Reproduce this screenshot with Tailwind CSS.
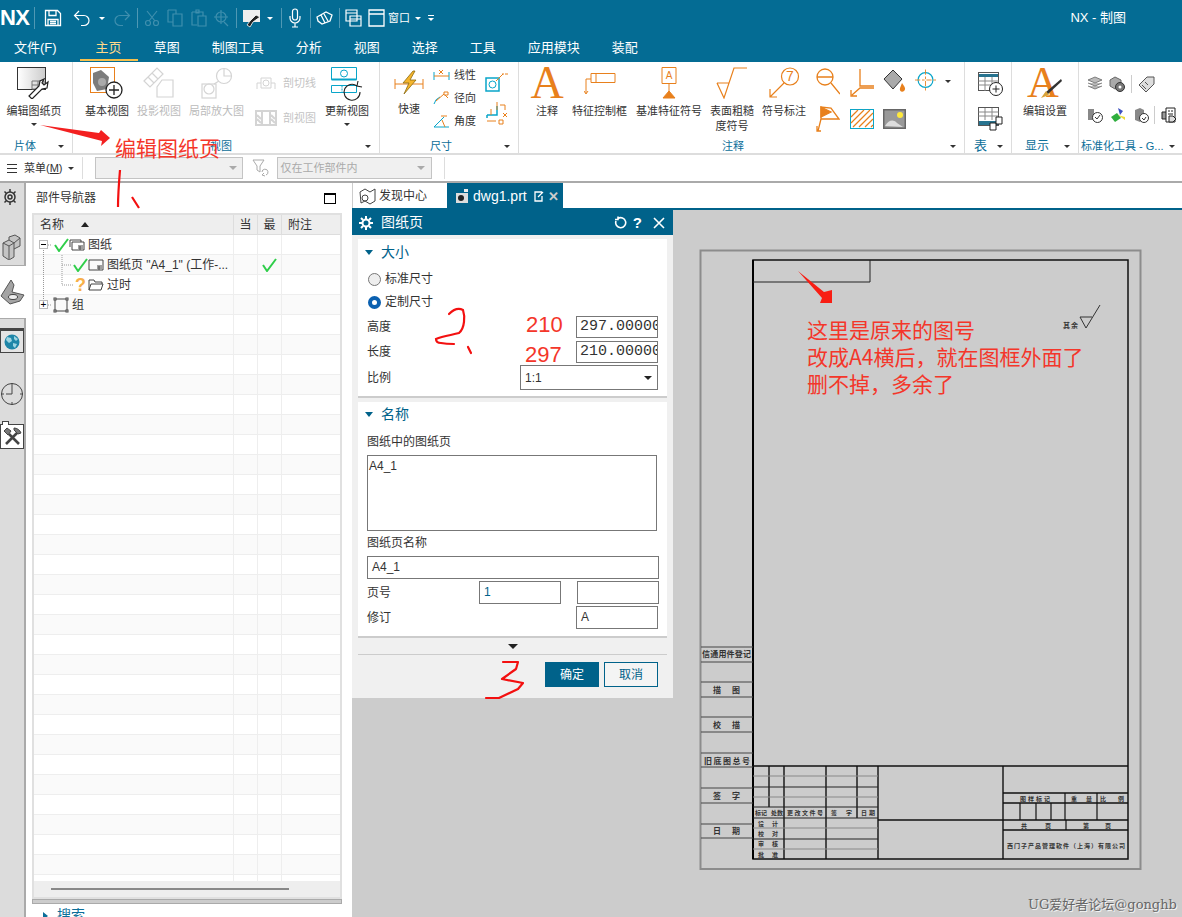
<!DOCTYPE html>
<html lang="zh">
<head>
<meta charset="utf-8">
<title>NX - 制图</title>
<script src="https://cdn.jsdelivr.net/npm/@tailwindcss/browser@4"></script>
</head>
<body class="bg-white">
<div class="relative w-[1182px] h-[917px] overflow-hidden text-[#333] text-[11px] font-['Liberation_Sans','Noto_Sans_CJK_SC',sans-serif]">

  <!-- title bar + menu -->
  <header class="h-[62px] bg-[#046c94] text-white">
    <div class="h-[36px] flex items-center relative">
      <span class="w-[35px] text-[22px] font-bold leading-none tracking-tight border-r border-white/30">NX</span>
      <svg class="ml-[9px] w-[18px] h-[18px]" viewBox="0 0 18 18" fill="none" stroke="#fff" stroke-width="1.3"><path d="M1.5 1.5h12l3 3v12h-15zM5 1.5v5h7v-5M4 16.5v-6h10v6M6 12.5h6M6 14.5h6"/></svg>
      <svg class="ml-[11px] w-[18px] h-[18px]" viewBox="0 0 18 18" fill="none" stroke="#fff" stroke-width="1.2"><path d="M6 2L1.5 6.500 6 11M1.500 6.500h9.500a5 5 0 0 1 0 10h-3"/></svg>
      <span class="ml-[8px] w-0 h-0 border-x-[3px] border-t-[3px] border-x-transparent border-t-white"></span>
      <svg class="ml-[8px] w-[18px] h-[18px]" viewBox="0 0 18 18" fill="none" stroke="#3f8fae" stroke-width="1.2"><path d="M12 2l4.500 4.500L12 11M16.500 6.500H7a5 5 0 0 0 0 10h3"/></svg>
      <span class="ml-[6px] h-[20px] border-l border-white/30"></span>
      <svg class="ml-[6px] w-[16px] h-[18px]" viewBox="0 0 16 18" fill="none" stroke="#3f8fae" stroke-width="1.200"><circle cx="4" cy="14" r="2.500"/><circle cx="12" cy="14" r="2.500"/><path d="M5 12L13 2M11 12L3 2"/></svg>
      <svg class="ml-[7px] w-[16px] h-[18px]" viewBox="0 0 16 18" fill="none" stroke="#3f8fae" stroke-width="1.200"><path d="M1 1h8v4M1 1v12h5M6 5h9v12H6z"/></svg>
      <svg class="ml-[8px] w-[16px] h-[18px]" viewBox="0 0 16 18" fill="none" stroke="#3f8fae" stroke-width="1.200"><path d="M1 3h11v4M1 3v13h5M5 1h3v3H5zM7 7h8v10H7z"/></svg>
      <svg class="ml-[6px] w-[16px] h-[18px]" viewBox="0 0 16 18" fill="none" stroke="#3f8fae" stroke-width="1.200"><circle cx="8" cy="8" r="5"/><path d="M8 1v14M1 8h14M11 13l4 4"/></svg>
      <span class="ml-[7px] h-[20px] border-l border-white/30"></span>
      <svg class="ml-[5px] w-[20px] h-[20px]" viewBox="0 0 20 20"><path d="M1 2h17v12H1z" fill="#eee"/><path d="M14 7l4 2-7 5-3 5-3-2 3-4z" fill="#222" stroke="#fff" stroke-width=".8"/></svg>
      <span class="ml-[5px] w-0 h-0 border-x-[3px] border-t-[3px] border-x-transparent border-t-white"></span>
      <span class="ml-[8px] h-[20px] border-l border-white/30"></span>
      <svg class="ml-[7px] w-[12px] h-[20px]" viewBox="0 0 12 20" fill="none" stroke="#fff" stroke-width="1.200"><rect x="3.500" y="1" width="5" height="11" rx="2.500"/><path d="M1 8v2a5 5 0 0 0 10 0V8M6 15v4M3 19h6"/></svg>
      <span class="ml-[9px] h-[20px] border-l border-white/30"></span>
      <svg class="ml-[5px] w-[17px] h-[16px]" viewBox="0 0 17 16" fill="none" stroke="#fff" stroke-width="1.300"><path d="M1 7l9-5 6 3-2 6-8 3-4-3zM5 5l4 8M8 4l4 7" /></svg>
      <span class="ml-[6px] h-[20px] border-l border-white/30"></span>
      <svg class="ml-[5px] w-[17px] h-[18px]" viewBox="0 0 17 18" fill="none" stroke="#fff" stroke-width="1.200"><path d="M1 1h11v11H1zM1 4h11M5 7h11v10H5zM5 10h11"/></svg>
      <svg class="ml-[6px] w-[17px] h-[18px]" viewBox="0 0 17 18" fill="none" stroke="#fff" stroke-width="1.300"><path d="M1 1h15v16H1zM1 5h15"/></svg>
      <span class="ml-[3px] text-[11px]">窗口</span>
      <span class="ml-[5px] w-0 h-0 border-x-[3px] border-t-[3px] border-x-transparent border-t-white"></span>
      <span class="ml-[7px] w-[6px] border-t border-white pt-[2px]"><span class="block w-0 h-0 border-x-[3px] border-t-[3px] border-x-transparent border-t-white"></span></span>
      <span class="ml-auto mr-[56px] text-[13px]">NX - 制图</span>
    </div>
    <nav class="h-[26px] -mt-[1px] flex items-center text-[13px] gap-[32px] pl-[14px] relative">
      <span class="mr-[7px]">文件(F)</span>
      <span class="relative text-[#ffd98a]">主页<span class="absolute left-[-16px] right-[-16px] top-[21px] h-[2px] bg-[#f5c04d]"></span></span>
      <span>草图</span>
      <span>制图工具</span>
      <span>分析</span>
      <span>视图</span>
      <span>选择</span>
      <span>工具</span>
      <span>应用模块</span>
      <span>装配</span>
    </nav>
  </header>

  <!-- ribbon -->
  <section class="h-[93px] flex border-b-2 border-[#ddd] bg-white">

    <div class="w-[73px] flex flex-col">
      <div class="h-[77px] flex border-r border-[#ddd] pt-[5px]">
        <div class="w-[68px] flex flex-col items-center">
          <svg class="w-[34px] h-[32px]" viewBox="0 0 34 32"><defs><linearGradient id="pg" x1="0" x2="1"><stop offset="0" stop-color="#fff"/><stop offset="1" stop-color="#ccc"/></linearGradient></defs><rect x=".5" y=".5" width="28" height="22" fill="url(#pg)" stroke="#333"/><path d="M15 14h12v8H15zM15 18h12M21 14v8" fill="none" stroke="#777"/><path d="M31 15l-4 3-2-2 2-4-4 2-1 5-10 10 3 3 10-10 5-1z" fill="#fff" stroke="#222" stroke-width="1.200"/></svg>
          <span class="mt-[5px] leading-[14px]">编辑图纸页</span>
          <span class="mt-[5px] w-0 h-0 border-x-[3px] border-t-[3px] border-x-transparent border-t-[#333]"></span>
        </div>
      </div>
      <div class="h-[14px] flex items-center border-r border-[#ddd] text-[#0b6e99] pl-[14px] pr-[8px] justify-between"><span>片体</span><span class="w-0 h-0 border-x-[3px] border-t-[3px] border-x-transparent border-t-[#333]"></span></div>
    </div>

    <div class="w-[307px] flex flex-col">
      <div class="h-[77px] flex pl-[12px] pt-[5px] border-r border-[#ddd]">
        <div class="w-[44px] flex flex-col items-center">
          <svg class="w-[34px] h-[32px]" viewBox="0 0 34 32"><rect x=".5" y=".5" width="24" height="25" fill="none" stroke="#e8801c"/><path d="M3 6l8-3 8 7-2 12-10 2-4-8z" fill="#7c7c7c"/><circle cx="12" cy="15" r="4" fill="#aaa"/><circle cx="24" cy="23" r="8" fill="#fff" stroke="#222" stroke-width="1.300"/><path d="M24 18v10M19 23h10" stroke="#222" stroke-width="1.300"/></svg>
          <span class="mt-[5px] leading-[14px]">基本视图</span>
        </div>
        <div class="ml-[8px] w-[44px] flex flex-col items-center text-[#bbb]">
          <svg class="w-[32px] h-[32px]" viewBox="0 0 32 32" fill="none" stroke="#d4d4d4" stroke-width="1.200"><path d="M1 14L14 1l6 6L7 20zM5 10l6 6M9 6l6 6M19 13h11v17H14V20z"/></svg>
          <span class="mt-[5px] leading-[14px]">投影视图</span>
        </div>
        <div class="ml-[8px] w-[55px] flex flex-col items-center text-[#bbb]">
          <svg class="w-[32px] h-[32px]" viewBox="0 0 32 32" fill="none" stroke="#d4d4d4" stroke-width="1.200"><rect x="1" y="17" width="14" height="14"/><circle cx="8" cy="22" r="5"/><circle cx="23" cy="9" r="7.500"/><path d="M23 2v7h7M13 17l5-3"/></svg>
          <span class="mt-[5px] leading-[14px]">局部放大图</span>
        </div>
        <div class="ml-[11px] w-[61px] flex flex-col text-[#c4c4c4]">
          <div class="flex items-center h-[18px] mt-[7px]">
            <svg class="w-[22px] h-[16px]" viewBox="0 0 22 16" fill="none" stroke="#d4d4d4"><path d="M2 14V8h4M20 14V8h-4M6 3h10v10H6z"/><circle cx="11" cy="8" r="3"/></svg>
            <span class="ml-[6px]">剖切线</span>
          </div>
          <div class="flex items-center h-[18px] mt-[17px]">
            <svg class="w-[22px] h-[16px]" viewBox="0 0 22 16" fill="none" stroke="#d4d4d4" stroke-width="2"><path d="M1 1h20v14H1zM7 1v14M15 1v14M2 5l4 4M2 9l4 4M16 5l4 4M16 9l4 4"/></svg>
            <span class="ml-[6px]">剖视图</span>
          </div>
        </div>
        <div class="ml-[9px] w-[44px] flex flex-col items-center">
          <svg class="w-[32px] h-[36px]" viewBox="0 0 32 36" fill="none"><path d="M.5 .5h25v12H.5z" stroke="#09a5c9"/><circle cx="13" cy="6.500" r="3.500" stroke="#09a5c9"/><path d="M.5 12.500h25" stroke="#09a5c9" stroke-width="2"/><path d="M.5 18.500h25v7H.5z" stroke="#09a5c9"/><path d="M11 18.500v7" stroke="#09a5c9" stroke-dasharray="2 1"/><path d="M29 25a8 8 0 1 1-3-6M27 14l-1 5 5 1" stroke="#222" stroke-width="1.100"/></svg>
          <span class="mt-[1px] leading-[14px]">更新视图</span>
          <span class="mt-[5px] w-0 h-0 border-x-[3px] border-t-[3px] border-x-transparent border-t-[#333]"></span>
        </div>
      </div>
      <div class="h-[14px] flex items-center border-r border-[#ddd] text-[#0b6e99] pr-[8px]"><span class="ml-[137px]">视图</span><span class="ml-auto w-0 h-0 border-x-[3px] border-t-[3px] border-x-transparent border-t-[#333]"></span></div>
    </div>

    <div class="w-[139px] flex flex-col">
      <div class="h-[77px] flex pl-[14px] border-r border-[#ddd]">
        <div class="w-[30px] mt-[8px] flex flex-col items-center">
          <svg class="w-[30px] h-[26px]" viewBox="0 0 30 26" fill="none"><path d="M1 9v10M29 9v10M1 14h28" stroke="#e8801c"/><path d="M19 1L9 13h6l-5 11 12-14h-6l5-9z" fill="#f5b52c" stroke="#8a6a10" stroke-width=".8"/></svg>
          <span class="mt-[6px] leading-[14px]">快速</span>
        </div>
        <div class="ml-[9px] flex flex-col gap-[9px] pt-[6px]">
          <div class="flex items-center h-[14px]"><svg class="w-[17px] h-[12px]" viewBox="0 0 17 12" fill="none"><path d="M1 3v8M16 3v8" stroke="#09a5c9"/><path d="M1 7h15" stroke="#e8801c"/><path d="M6 1l4 4M10 1L6 5" stroke="#e8801c"/></svg><span class="ml-[4px]">线性</span></div>
          <div class="flex items-center h-[14px]"><svg class="w-[17px] h-[14px]" viewBox="0 0 17 14" fill="none"><path d="M1 13a10 10 0 0 1 6-7" stroke="#09a5c9"/><path d="M3 10l8-7" stroke="#e8801c"/><path d="M11 1h4v3h-4zM12 4l3 3" stroke="#e8801c"/></svg><span class="ml-[4px]">径向</span></div>
          <div class="flex items-center h-[14px]"><svg class="w-[17px] h-[14px]" viewBox="0 0 17 14" fill="none"><path d="M1 13L11 3M1 13h15" stroke="#09a5c9"/><path d="M9 6l3 7M8 2h6" stroke="#e8801c"/></svg><span class="ml-[4px]">角度</span></div>
        </div>
        <div class="ml-[9px] flex flex-col gap-[9px] pt-[11px]">
          <svg class="w-[24px] h-[19px]" viewBox="0 0 24 19" fill="none"><rect x="1" y="5" width="13" height="13" stroke="#09a5c9" stroke-width="1.500"/><circle cx="7.500" cy="11.500" r="3.500" stroke="#09a5c9"/><path d="M11 8l7-7M17 1h2M20 1h3" stroke="#e8801c"/></svg>
          <svg class="w-[24px] h-[24px]" viewBox="0 0 24 24" fill="none"><path d="M2 14h10v-9M2 14v3" stroke="#09a5c9" stroke-width="1.500"/><path d="M12 1v8M6 8v6M15 4h5v5M18 12l4 4M22 12l-4 4M2 20h9M14 19h4v4h-4z" stroke="#e8801c"/></svg>
        </div>
      </div>
      <div class="h-[14px] flex items-center border-r border-[#ddd] text-[#0b6e99] pr-[8px]"><span class="ml-[50px]">尺寸</span><span class="ml-auto w-0 h-0 border-x-[3px] border-t-[3px] border-x-transparent border-t-[#333]"></span></div>
    </div>

    <div class="w-[446px] flex flex-col">
      <div class="h-[77px] flex pt-[5px] border-r border-[#ddd]">
        <div class="ml-[17px] w-[22px] flex flex-col items-center">
          <svg class="w-[34px] h-[32px] shrink-0 overflow-visible" viewBox="0 0 34 32"><text x="17" y="31" font-size="46" text-anchor="middle" fill="#e8801c" font-family="Liberation Serif">A</text></svg>
          <span class="mt-[5px] leading-[14px]">注释</span>
        </div>
        <div class="ml-[14px] w-[55px] flex flex-col items-center">
          <svg class="w-[32px] h-[32px]" viewBox="0 0 32 32" fill="none" stroke="#e8801c"><path d="M2 12v14M2 12h5M7 6.500h24v9H7zM12 6.500v9"/><path d="M0 24l2 3 2-3" /></svg>
          <span class="mt-[5px] leading-[14px]">特征控制框</span>
        </div>
        <div class="ml-[9px] w-[66px] flex flex-col items-center">
          <svg class="w-[18px] h-[32px]" viewBox="0 0 18 32" fill="none" stroke="#e8801c"><path d="M2 .5h14v16H2zM9 16v10"/><text x="9" y="12" font-size="10" text-anchor="middle" fill="#e8801c" stroke="none">A</text><path d="M3 31l6-7 6 7z" fill="#e8801c"/></svg>
          <span class="mt-[5px] leading-[14px]">基准特征符号</span>
        </div>
        <div class="ml-[8px] w-[44px] flex flex-col items-center text-center">
          <svg class="w-[32px] h-[32px]" viewBox="0 0 32 32" fill="none" stroke="#e8801c" stroke-width="1.200"><path d="M1 16h12M1 16l7 15L18 1h13"/></svg>
          <span class="mt-[5px] leading-[15px]">表面粗糙度符号</span>
        </div>
        <div class="ml-[8px] w-[44px] flex flex-col items-center">
          <svg class="w-[32px] h-[32px]" viewBox="0 0 32 32" fill="none" stroke="#e8801c" stroke-width="1.200"><circle cx="22" cy="9.500" r="8.500"/><text x="22" y="14" font-size="14" text-anchor="middle" fill="#e8801c" stroke="none">7</text><path d="M16 16L2 30M2 22v8h7"/></svg>
          <span class="mt-[5px] leading-[14px]">符号标注</span>
        </div>
        <div class="ml-[10px] grid grid-cols-[34px_33px_32px_36px] gap-y-[8px] h-[66px]">
          <svg class="w-[24px] h-[30px]" viewBox="0 0 24 30" fill="none" stroke="#e8801c" stroke-width="1.300"><circle cx="9" cy="10" r="8"/><path d="M1 10h16M15 16l9 11"/></svg>
          <svg class="w-[24px] h-[30px]" viewBox="0 0 24 30" fill="none" stroke="#e8801c" stroke-width="1.300"><path d="M10 2v17h14M24 21H10l-8 7M1 23v6h6"/></svg>
          <svg class="w-[24px] h-[30px]" viewBox="0 0 24 30"><path d="M1 12L10 3l9 9-9 10z" fill="#aaa" stroke="#333"/><path d="M19 16c3 4 4 6 2 8s-5 0-4-3z" fill="#e8801c"/></svg>
          <div class="flex items-start">
            <svg class="w-[24px] h-[26px]" viewBox="0 0 24 26" fill="none"><circle cx="12" cy="13" r="8.500" stroke="#09a5c9" stroke-width="1.300"/><path d="M12 1v24M0 13h24" stroke="#e8801c" stroke-dasharray="6 2 3 2"/></svg>
            <span class="ml-[9px] mt-[13px] w-0 h-0 border-x-[3px] border-t-[3px] border-x-transparent border-t-[#333]"></span>
          </div>
          <svg class="w-[24px] h-[26px]" viewBox="0 0 24 26" fill="none" stroke="#e8801c" stroke-width="1.300"><path d="M5 1v12h18l-8-11z"/><path d="M5 1l10 5-10 5z" fill="#e8801c"/><path d="M5 13L2 25M1 20v5h4"/></svg>
          <svg class="w-[24px] h-[20px] mt-[3px]" viewBox="0 0 24 20" fill="none"><rect x=".5" y=".5" width="23" height="19" stroke="#09a5c9"/><path d="M1 8l7-7M1 14L14 1M3 18L20 1M9 18L23 4M15 18l8-8M21 18l2-2" stroke="#e8801c" stroke-width="1.200"/></svg>
          <svg class="w-[23px] h-[20px] mt-[3px]" viewBox="0 0 23 20"><rect width="23" height="20" fill="#666"/><rect x="1.500" y="1.500" width="20" height="17" fill="#999"/><circle cx="17" cy="6" r="3" fill="#ffe93c"/><path d="M2 17c4-6 8-7 12-3l6 4z" fill="#ddd"/></svg>
        </div>
      </div>
      <div class="h-[14px] flex items-center border-r border-[#ddd] text-[#0b6e99] pr-[8px]"><span class="ml-[203px]">注释</span><span class="ml-auto w-0 h-0 border-x-[3px] border-t-[3px] border-x-transparent border-t-[#333]"></span></div>
    </div>

    <div class="w-[47px] flex flex-col">
      <div class="h-[77px] flex flex-col pl-[13px] pt-[10px] gap-[11px] border-r border-[#ddd]">
        <svg class="w-[25px] h-[24px]" viewBox="0 0 25 24" fill="none"><rect x=".5" y=".5" width="20" height="18" stroke="#555"/><path d="M1 2h19v3H1z" fill="#27738f"/><path d="M.5 9h20M.5 13h20M7 5v14M14 5v14" stroke="#888"/><circle cx="18" cy="17" r="6.500" fill="#fff" stroke="#222"/><path d="M18 13.500v7M14.500 17h7" stroke="#222"/></svg>
        <svg class="w-[25px] h-[24px]" viewBox="0 0 25 24" fill="none"><rect x=".5" y=".5" width="20" height="18" stroke="#555"/><path d="M.5 5h20M.5 9h20M7 1v12M14 1v12" stroke="#888"/><path d="M1 14h19v4H1z" fill="#27738f"/><path d="M18 10h6v7h-6zM12 16h6v7h-6z" fill="#fff" stroke="#222"/></svg>
      </div>
      <div class="h-[14px] flex items-center justify-between border-r border-[#ddd] text-[13px] text-[#0b6e99] pl-[3px] pr-[8px]"><span class="ml-[6px]">表</span><span class="w-0 h-0 border-x-[3px] border-t-[3px] border-x-transparent border-t-[#333]"></span></div>
    </div>

    <div class="w-[67px] flex flex-col">
      <div class="h-[77px] flex flex-col items-center pt-[5px] border-r border-[#ddd]">
        <svg class="w-[34px] h-[32px] shrink-0 overflow-visible" viewBox="0 0 34 32"><text x="15" y="30" font-size="44" text-anchor="middle" fill="#e8801c" font-family="Liberation Serif">A</text><path d="M33 12L18 25l-2 3 4-1L34 14z" fill="#333"/><path d="M18 24l-5 7 8-3z" fill="#d8a33a"/></svg>
        <span class="mt-[5px] leading-[14px]">编辑设置</span>
      </div>
      <div class="h-[14px] flex items-center justify-between border-r border-[#ddd] text-[#0b6e99] pl-[13px] pr-[8px]"><span class="text-[12px]">显示</span><span class="w-0 h-0 border-x-[3px] border-t-[3px] border-x-transparent border-t-[#333]"></span></div>
    </div>

    <div class="flex-1 flex flex-col">
      <div class="h-[77px] flex flex-col pl-[8px] pt-[13px] gap-[13px]">
        <div class="flex items-center h-[18px]">
          <svg class="w-[16px] h-[16px]" viewBox="0 0 16 16" fill="#bbb" stroke="#666" stroke-width=".8"><path d="M8 1l7 3-7 3-7-3zM1 7l7 3 7-3M1 10l7 3 7-3"/></svg>
          <svg class="ml-[6px] w-[16px] h-[16px]" viewBox="0 0 16 16"><path d="M6 1l6 3v6l-6 3-5-3V4z" fill="#aaa" stroke="#666"/><circle cx="11" cy="11" r="4.500" fill="#777" stroke="#333"/><circle cx="11" cy="11" r="1.500" fill="#fff"/></svg>
          <span class="ml-[6px] h-[18px] border-l border-[#ccc]"></span>
          <svg class="ml-[6px] w-[17px] h-[17px]" viewBox="0 0 17 17" fill="#ddd" stroke="#555"><path d="M1 9l8-8h7v7l-8 8zM4 9l4 4M7 6l3 3"/></svg>
        </div>
        <div class="flex items-center h-[18px]">
          <svg class="w-[16px] h-[16px]" viewBox="0 0 16 16"><path d="M1 2h6v11H1z" fill="#888"/><circle cx="10.500" cy="10.500" r="5" fill="#fff" stroke="#333"/><path d="M8 10l2 2 3-4" fill="none" stroke="#333"/></svg>
          <svg class="ml-[7px] w-[16px] h-[16px]" viewBox="0 0 16 16"><path d="M8 1l5 3-3 4z" fill="#3c4fc0"/><path d="M1 10l6-4 4 5-6 4z" fill="#2fae3e"/><path d="M8 8l7 2v3z" fill="#eddc3a"/></svg>
          <svg class="ml-[8px] w-[15px] h-[16px]" viewBox="0 0 15 16"><path d="M1 3l5-2 4 2v9l-4 3-5-2z" fill="#888"/><circle cx="10" cy="11" r="4.500" fill="#fff" stroke="#333"/><path d="M8 11l2 2 2-3" fill="none" stroke="#333"/></svg>
          <span class="ml-[5px] h-[18px] border-l border-[#ccc]"></span>
          <svg class="ml-[6px] w-[16px] h-[16px]" viewBox="0 0 16 16" fill="#fff" stroke="#222"><path d="M1 5h6v7H1z" fill="#999"/><path d="M5 1h9v14H5zM7 4h2M10 4h2M7 7h5"/><path d="M8 9h4l3 3-3 3H8z" fill="#ddd"/></svg>
        </div>
      </div>
      <div class="h-[14px] flex items-center text-[#0b6e99] pl-[2px] pr-[7px] justify-between"><span>标准化工具 - G...</span><span class="w-0 h-0 border-x-[3px] border-t-[3px] border-x-transparent border-t-[#333]"></span></div>
    </div>
  </section>

  <!-- selection bar -->
  <div class="h-[28px] flex items-center border-b-2 border-[#aaa] bg-white">
    <span class="ml-[7px] w-[10px] h-[9px] border-y border-[#333] flex items-center"><span class="w-full border-t border-[#333]"></span></span>
    <span class="ml-[7px]">菜单(<u>M</u>)</span>
    <span class="ml-[5px] w-0 h-0 border-x-[3px] border-t-[3px] border-x-transparent border-t-[#333]"></span>
    <span class="ml-[8px] h-[22px] border-l border-[#ddd]"></span>
    <div class="ml-[12px] w-[148px] h-[22px] bg-[#f0f0f0] border border-[#c4c4c4] flex items-center justify-end pr-[5px]"><span class="w-0 h-0 border-x-[4px] border-t-[4px] border-x-transparent border-t-[#aaa]"></span></div>
    <svg class="ml-[9px] w-[17px] h-[18px]" viewBox="0 0 17 18" fill="none" stroke="#aaa"><path d="M1 1h11L8 7v6L5 11V7zM10 13a3 3 0 1 1 4 3M13 17l-3-1 2-2"/></svg>
    <div class="ml-[8px] w-[155px] h-[22px] bg-[#f0f0f0] border border-[#c4c4c4] flex items-center justify-between px-[3px] text-[#aaa]"><span>仅在工作部件内</span><span class="mr-[3px] w-0 h-0 border-x-[4px] border-t-[4px] border-x-transparent border-t-[#aaa]"></span></div>
    <span class="ml-[12px] h-[22px] border-l border-[#ddd]"></span>
  </div>

  <main class="h-[734px] flex">
    <!-- resource bar -->
    <aside class="w-[26px] bg-[#dcdcdc] border-r-2 border-[#aaa] flex flex-col">
      <svg class="mt-[5px] ml-[1px] w-[18px] h-[18px]" viewBox="0 0 18 18" fill="none" stroke="#333" stroke-width="1.500"><circle cx="9" cy="9" r="5"/><circle cx="9" cy="9" r="2"/><path d="M9 1v3M9 14v3M3.500 3.500l2 2M12.500 12.500l2 2M3.500 14.500l2-2M12.500 5.500l2-2"/></svg>
      <svg class="mt-[28px] ml-[2px] w-[19px] h-[26px]" viewBox="0 0 19 26"><path d="M1 9l6-3V3l6-2 5 3v8l-6 3v8l-5 3-6-4z" fill="#c4c4c4" stroke="#555"/><path d="M1 9l6 3 5-3M7 12v13M7 6l5 3 6-5M12 9v6" fill="none" stroke="#555"/></svg>
      <div class="mt-[5px] w-[26px] h-[54px] -mr-[2px] bg-white border-y border-[#aaa] flex items-center relative z-10">
        <svg class="w-[25px] h-[26px]" viewBox="0 0 25 26"><path d="M1 17L11 1l3 5-2 7 12 3-4 6-10 3z" fill="#a4a4a4" stroke="#555"/><ellipse cx="13" cy="18" rx="4.500" ry="2.500" fill="#eee" stroke="#444"/></svg>
      </div>
      <div class="mt-[9px] w-[24px] h-[25px] border border-[#444] border-t-[3px] bg-[#e4e4e4] flex items-center justify-center">
        <svg class="w-[16px] h-[16px]" viewBox="0 0 16 16"><circle cx="8" cy="8" r="7.500" fill="#1f86a8"/><path d="M3 3l4 1 1 3-3 2-3-3zM10 2l4 3-2 2-2-2zM9 9l4 1-2 4-2-2z" fill="#9fd5e2"/></svg>
      </div>
      <svg class="mt-[29px] w-[24px] h-[24px]" viewBox="0 0 24 24" fill="none" stroke="#444"><circle cx="12" cy="12" r="10.500"/><path d="M12 1v3M12 20v3M1 12h3M20 12h3M12 4v8H6"/></svg>
      <div class="mt-[18px] w-[24px] h-[25px] border border-[#444] bg-white flex items-center justify-center relative">
        <span class="absolute left-[1px] top-[-4px] w-[7px] h-[4px] bg-white border border-b-0 border-[#444]"></span>
        <svg class="w-[21px] h-[21px]" viewBox="0 0 21 21" fill="none" stroke="#444" stroke-width="2.600"><path d="M4 18L16 6M17 18L7 8"/><path d="M2 5l3-3 4 3-3 4zM12 2c3 0 6 2 7 5l-3 1-4-4z" fill="#777" stroke-width="1"/></svg>
      </div>
    </aside>

    <!-- part navigator -->
    <div class="w-[326px] flex flex-col pl-[6px] pr-[10px] relative">
      <div class="h-[30px] shrink-0 flex items-center text-[12px] pl-[4px] pr-[6px] justify-between">
        <span>部件导航器</span>
        <span class="w-[12px] h-[11px] border border-black border-t-2"></span>
      </div>
      <div id="tree" class="relative h-[686px] shrink-0 border-2 border-[#e0e0e0] flex flex-col overflow-hidden text-[12px]">
        <div class="h-[20px] shrink-0 grid grid-cols-[200px_24px_24px_1fr] bg-[#eee] border-b border-[#ddd]">
          <div class="flex items-center pl-[6px] border-r border-[#ddd]">名称<span class="ml-[17px] w-0 h-0 border-x-[4px] border-b-[5px] border-x-transparent border-b-[#222]"></span></div>
          <div class="flex items-center justify-center border-r border-[#ddd]">当</div>
          <div class="flex items-center justify-center border-r border-[#ddd]">最</div>
          <div class="flex items-center pl-[6px]">附注</div>
        </div>
        <div class="h-[20px] shrink-0 grid grid-cols-[200px_24px_24px_1fr] border-b border-[#eee]">
          <div class="flex items-center pl-[20px] border-r border-[#eee]">
            <svg class="w-[15px] h-[14px]" viewBox="0 0 15 14" fill="none" stroke="#2fce4a" stroke-width="2"><path d="M1 7l4 6 9-12"/></svg>
            <svg class="w-[16px] h-[12px]" viewBox="0 0 16 12" fill="none" stroke="#444"><path d="M1 8V1h11v2M3 3h12v8H3zM9 7h5M9 9h5M11 7v4"/></svg>
            <span class="ml-[3px]">图纸</span>
          </div>
          <div class="border-r border-[#eee]"></div><div class="border-r border-[#eee]"></div><div></div>
        </div>
        <div class="h-[20px] shrink-0 grid grid-cols-[200px_24px_24px_1fr] bg-[#fafafa] border-b border-[#eee]">
          <div class="flex items-center pl-[39px] border-r border-[#eee]">
            <svg class="w-[15px] h-[14px]" viewBox="0 0 15 14" fill="none" stroke="#2fce4a" stroke-width="2"><path d="M1 7l4 6 9-12"/></svg>
            <svg class="w-[16px] h-[12px]" viewBox="0 0 16 12" fill="none" stroke="#444"><path d="M1 1h14v10H1zM9 7h5M9 9h5M11 7v4"/></svg>
            <span class="ml-[3px] whitespace-nowrap">图纸页 "A4_1" (工作-...</span>
          </div>
          <div class="border-r border-[#eee]"></div>
          <div class="flex items-center justify-center border-r border-[#eee]"><svg class="w-[15px] h-[14px]" viewBox="0 0 15 14" fill="none" stroke="#2fce4a" stroke-width="2"><path d="M1 7l4 6 9-12"/></svg></div>
          <div></div>
        </div>
        <div class="h-[20px] shrink-0 grid grid-cols-[200px_24px_24px_1fr] border-b border-[#eee]">
          <div class="flex items-center pl-[39px] border-r border-[#eee]">
            <span class="w-[15px] text-center text-[18px] leading-none font-bold text-[#f7b04a]">?</span>
            <svg class="w-[16px] h-[12px]" viewBox="0 0 16 12" fill="none" stroke="#444"><path d="M1 11V1h5l1 2h7v2M1 11h12l2-6H3z"/></svg>
            <span class="ml-[3px]">过时</span>
          </div>
          <div class="border-r border-[#eee]"></div><div class="border-r border-[#eee]"></div><div></div>
        </div>
        <div class="h-[20px] shrink-0 grid grid-cols-[200px_24px_24px_1fr] bg-[#fafafa] border-b border-[#eee]">
          <div class="flex items-center pl-[19px] border-r border-[#eee]">
            <svg class="w-[16px] h-[16px]" viewBox="0 0 16 16" fill="#fff" stroke="#444"><path d="M2 2h12v12H2z" fill="none"/><rect x="1" y="1" width="2" height="2"/><rect x="13" y="1" width="2" height="2"/><rect x="1" y="13" width="2" height="2"/><rect x="13" y="13" width="2" height="2"/></svg>
            <span class="ml-[3px]">组</span>
          </div>
          <div class="border-r border-[#eee]"></div><div class="border-r border-[#eee]"></div><div></div>
        </div>
        <!-- tree connectors -->
        <svg id="tree-lines" class="absolute left-0 top-0 w-[60px] h-[100px]" viewBox="0 0 60 100" fill="none" stroke="#999" stroke-dasharray="1 1"><path d="M9.500 35v50M14 30h4M28 40v30h11M28 50h10M14 90h4"/></svg>
        <span class="absolute left-[5px] top-[25px] w-[9px] h-[9px] bg-white border border-[#bbb] flex items-center justify-center"><span class="w-[5px] border-t border-black"></span></span>
        <span class="absolute left-[5px] top-[85px] w-[9px] h-[9px] bg-white border border-[#bbb] flex items-center justify-center text-[10px] leading-none text-black">+</span>
      </div>
      <div class="h-[16px] shrink-0 -mt-[18px] mx-[2px] z-10 bg-[#eee] flex items-center px-[17px]"><span class="block w-[238px] h-[2px] bg-[#888]"></span></div>
      <div class="h-[5px] shrink-0 mt-[2px] border border-[#aaa] bg-[#ccc]"></div>
      <div class="mt-[1px] shrink-0 flex items-center text-[#0b6e99] text-[14px] pl-[11px]"><span class="w-0 h-0 border-y-[4px] border-l-[5px] border-y-transparent border-l-[#0b6e99]"></span><span class="ml-[9px]">搜索</span></div>
    </div>

    <!-- graphics area -->
    <div class="w-[830px] flex flex-col">
      <div class="h-[27px] shrink-0 flex border-b-2 border-[#00628a] bg-white text-[12px]">
        <div class="w-[95px] flex items-center pl-[6px] pt-[1px] border-l border-[#ccc]">
          <svg class="w-[17px] h-[17px]" viewBox="0 0 17 17" fill="none" stroke="#444"><path d="M1 4l5-3 5 3 5-3v12l-5 3-5-3-4 2z"/><circle cx="6" cy="10" r="3"/></svg>
          <span class="ml-[3px]">发现中心</span>
        </div>
        <div class="w-[116px] flex items-center pl-[8px] pt-[1px] bg-[#00628a] text-white text-[14px]">
          <svg class="w-[14px] h-[15px]" viewBox="0 0 14 15"><path d="M1 4h12v10H1z" fill="#ddd"/><circle cx="6" cy="9" r="3" fill="#222"/><path d="M9 0h4v3H9z" fill="#eee"/></svg>
          <span class="ml-[4px]">dwg1.prt</span>
          <svg class="ml-[7px] w-[10px] h-[11px]" viewBox="0 0 10 11" fill="none" stroke="#fff" stroke-width="1.300"><path d="M8 1H1v9h7V5M4 6l5-5"/></svg>
          <span class="ml-[4px] text-[#ccc] text-[13px] font-bold leading-none">✕</span>
        </div>
      </div>
      <div class="relative flex-1 bg-[#cccccc]">
        <!-- sheet -->
        <svg class="absolute left-0 top-0 w-[830px] h-[707px]" viewBox="352 210 830 707" fill="none" font-family="Noto Sans CJK SC" font-weight="700">
          <rect x="700.500" y="250.500" width="440" height="618.500" stroke="#8c8c8c" stroke-width="2"/>
          <path d="M753 260h375v599H753z" stroke="#111" stroke-width="1.500"/>
          <path d="M753 260v599" stroke="#000" stroke-width="2"/>
          <path d="M753 282h117v-22" stroke="#222"/>
          <path d="M701 647h52M701 662h52M701 682h52M701 697h52M701 717h52M701 732h52M701 753h52M701 767h52M701 788h52M701 803h52M701 824h52M701 838h52" stroke="#444"/>
          <path d="M753 766h375M769 766v41M784 766v93M826 766v93M857 766v52M878 766v93M1003 766v93" stroke="#111" stroke-width="1.400"/>
          <path d="M753 776h125M753 797h125M753 828h125M753 849h125" stroke="#888"/>
          <path d="M753 787h125M753 807h125M753 818h125M753 839h125" stroke="#222"/>
          <path d="M878 820h250M1003 793h125M1003 803h125M1003 830h125" stroke="#111" stroke-width="1.400"/>
          <path d="M1065 793v27M1097 793v27M1020 803v17M1036 803v17M1051 803v17M1066 820v10" stroke="#111" stroke-width="1.200"/>
          <path d="M1080 317h12M1080 317l6 11 14-23" stroke="#333"/>
          <g fill="#333" font-size="8">
            <text x="702" y="657" textLength="49" lengthAdjust="spacing">信通用件登记</text>
            <text x="713" y="693" textLength="27" lengthAdjust="spacing">描图</text>
            <text x="713" y="728" textLength="27" lengthAdjust="spacing">校描</text>
            <text x="704" y="764" textLength="46" lengthAdjust="spacing">旧底图总号</text>
            <text x="713" y="799" textLength="27" lengthAdjust="spacing">签字</text>
            <text x="713" y="834" textLength="27" lengthAdjust="spacing">日期</text>
          </g>
          <text x="1063" y="328" font-size="7" fill="#333" textLength="15" lengthAdjust="spacing">其余</text>
          <g fill="#333" font-size="6">
            <text x="755" y="815">标记</text>
            <text x="771" y="815">处数</text>
            <text x="787" y="815" textLength="36">更改文件号</text>
            <text x="831" y="815" textLength="21">签字</text>
            <text x="861" y="815" textLength="14">日期</text>
            <text x="758" y="826" textLength="20">设计</text>
            <text x="758" y="836" textLength="20">校对</text>
            <text x="758" y="846" textLength="20">审核</text>
            <text x="758" y="857" textLength="20">批准</text>
            <text x="1020" y="801" textLength="30">图样标记</text>
            <text x="1071" y="801" textLength="21">重量</text>
            <text x="1100" y="801" textLength="24">比例</text>
            <text x="1021" y="828" textLength="30">共页</text>
            <text x="1083" y="828" textLength="28">第页</text>
            <text x="1007" y="848" textLength="118">西门子产品管理软件（上海）有限公司</text>
          </g>
        </svg>

        <!-- sheet dialog -->
        <div class="relative w-[321px] h-[488px] bg-[#f0f0f0] text-[12px] flex flex-col">
          <div class="h-[25px] shrink-0 bg-[#00628a] text-white flex items-center pl-[7px] pr-[8px]">
            <svg class="w-[14px] h-[14px]" viewBox="0 0 14 14" fill="none" stroke="#fff" stroke-width="2"><circle cx="7" cy="7" r="3.500"/><path d="M7 0v3M7 11v3M0 7h3M11 7h3M2 2l2 2M10 10l2 2M2 12l2-2M10 4l2-2"/></svg>
            <span class="ml-[8px] text-[14px]">图纸页</span>
            <svg class="ml-auto w-[13px] h-[13px]" viewBox="0 0 13 13" fill="none" stroke="#fff" stroke-width="1.600"><path d="M4 2.500a5 5 0 1 1-2 2.500M4 .5v3H1"/></svg>
            <span class="ml-[6px] text-[15px] font-bold leading-none">?</span>
            <svg class="ml-[11px] w-[12px] h-[12px]" viewBox="0 0 12 12" stroke="#fff" stroke-width="1.600"><path d="M1 1l10 10M11 1L1 11"/></svg>
          </div>
          <div class="mx-[6px] mt-[4px] h-[159px] shrink-0 bg-white border-b-2 border-[#ccc] flex flex-col">
            <div class="mt-[6px] h-[14px] flex items-center pl-[7px] text-[#00628a] text-[14px]"><span class="w-0 h-0 border-x-[4px] border-t-[5px] border-x-transparent border-t-[#00628a]"></span><span class="ml-[8px]">大小</span></div>
            <div class="mt-[12px] h-[16px] flex items-center pl-[10px]"><span class="w-[13px] h-[13px] rounded-full border border-[#777] bg-[#eee]"></span><span class="ml-[4px]">标准尺寸</span></div>
            <div class="mt-[7px] h-[16px] flex items-center pl-[10px]"><span class="w-[13px] h-[13px] rounded-full border-[4px] border-[#0a60b0] bg-white"></span><span class="ml-[4px]">定制尺寸</span></div>
            <div class="mt-[6px] h-[22px] flex items-center pl-[9px] pr-[9px] justify-between"><span>高度</span><span class="w-[82px] h-[22px] overflow-hidden border border-[#777] bg-white text-[15px] leading-[20px] whitespace-nowrap pl-[3px] font-['Liberation_Mono',monospace]">297.00000</span></div>
            <div class="mt-[3px] h-[22px] flex items-center pl-[9px] pr-[9px] justify-between"><span>长度</span><span class="w-[82px] h-[22px] overflow-hidden border border-[#777] bg-white text-[15px] leading-[20px] whitespace-nowrap pl-[3px] font-['Liberation_Mono',monospace]">210.00000</span></div>
            <div class="mt-[2px] h-[25px] flex items-center pl-[9px] pr-[9px] justify-between"><span>比例</span><span class="w-[138px] h-[25px] border border-[#777] bg-white flex items-center justify-between px-[4px]">1:1<span class="mr-[1px] w-0 h-0 border-x-[4px] border-t-[4px] border-x-transparent border-t-[#222]"></span></span></div>
          </div>
          <div class="mx-[6px] mt-[4px] h-[236px] shrink-0 bg-white border-b-2 border-[#ccc] flex flex-col">
            <div class="mt-[5px] h-[14px] flex items-center pl-[7px] text-[#00628a] text-[14px]"><span class="w-0 h-0 border-x-[4px] border-t-[5px] border-x-transparent border-t-[#00628a]"></span><span class="ml-[8px]">名称</span></div>
            <div class="mt-[13px] pl-[9px] leading-[16px]">图纸中的图纸页</div>
            <div class="mt-[5px] ml-[9px] w-[290px] h-[76px] border border-[#777] pl-[1px] pt-[2px] leading-[16px]">A4_1</div>
            <div class="mt-[4px] pl-[9px] leading-[16px]">图纸页名称</div>
            <div class="mt-[5px] ml-[9px] w-[292px] h-[23px] border border-[#777] pl-[4px] leading-[21px]">A4_1</div>
            <div class="mt-[2px] h-[23px] flex items-center pl-[9px]"><span>页号</span><span class="ml-[88px] w-[82px] h-[23px] border border-[#777] pl-[4px] leading-[21px] text-[#00628a]">1</span><span class="ml-[16px] w-[82px] h-[23px] border border-[#777]"></span></div>
            <div class="mt-[2px] h-[23px] flex items-center pl-[9px] pr-[9px] justify-between"><span>修订</span><span class="w-[82px] h-[23px] border border-[#777] pl-[4px] leading-[21px]">A</span></div>
          </div>
          <div class="mx-[6px] h-[17px] shrink-0 border-b border-[#ccc] flex items-center justify-center"><span class="w-0 h-0 border-x-[5px] border-t-[5px] border-x-transparent border-t-[#222]"></span></div>
          <div class="mt-[7px] mr-[15px] flex justify-end gap-[5px]">
            <span class="w-[54px] h-[25px] bg-[#00628a] text-white flex items-center justify-center">确定</span>
            <span class="w-[54px] h-[25px] border border-[#00628a] bg-[#f4f4f4] text-[#00628a] flex items-center justify-center">取消</span>
          </div>
        </div>
      </div>
    </div>
  </main>

  <!-- red mark-up drawn over the screenshot -->
  <svg class="absolute inset-0 w-[1182px] h-[917px] pointer-events-none" viewBox="0 0 1182 917" fill="none" font-family="Noto Sans CJK SC">
    <path d="M40 125L99 133l2-3 9 8-9 8 1-5z" fill="#f32020"/>
    <text x="115" y="156" font-size="21" fill="#f4362a">编辑图纸页</text>
    <path d="M120 170c-1 12-2 25-2 37M132 197l7 11" stroke="#f31010" stroke-width="2.200"/>
    <path d="M449 314c5-5 10-6 14-4 2 6 2 18-4 23-7 2-16 3-23 6 0 3 2 4 5 4 5 1 11 1 13 1M468 347l3 6" stroke="#f31010" stroke-width="2.200" stroke-linecap="round"/>
    <text x="526" y="332" font-size="22" fill="#f4362a" font-family="Liberation Sans">210</text>
    <text x="525" y="362" font-size="22" fill="#f4362a" font-family="Liberation Sans">297</text>
    <path d="M503 662h15l-2 7-14 10 21 4-5 6-19 9h-13" stroke="#f31010" stroke-width="2.200" stroke-linecap="round" stroke-linejoin="round"/>
    <path d="M798 271l26 21 8-2v13h-12l2-5z" fill="#f81e14"/>
    <g font-size="21" fill="#f4362a">
      <text x="807" y="338">这里是原来的图号</text>
      <text x="807" y="365">改成A4横后，就在图框外面了</text>
      <text x="807" y="392">删不掉，多余了</text>
    </g>
  </svg>
  <span class="absolute left-[1028px] top-[896px] text-[13px] leading-[18px] whitespace-nowrap text-[#666] [text-shadow:1px_1px_0_#f4f4f4] font-['DejaVu_Serif','Noto_Sans_CJK_SC',serif]">UG爱好者论坛@gonghb</span>
</div>
<script>
  // fill the navigator table with its empty striped rows
  var tree = document.getElementById('tree');
  var lines = document.getElementById('tree-lines');
  for (var i = 0; i < 30; i++) {
    var row = document.createElement('div');
    row.className = 'h-[20px] shrink-0 grid grid-cols-[200px_24px_24px_1fr] border-b border-[#eee] ' + (i % 2 ? 'bg-[#fafafa]' : 'bg-white');
    row.innerHTML = '<div class="border-r border-[#eee]"></div><div class="border-r border-[#eee]"></div><div class="border-r border-[#eee]"></div><div></div>';
    tree.insertBefore(row, lines);
  }
</script>
</body>
</html>
